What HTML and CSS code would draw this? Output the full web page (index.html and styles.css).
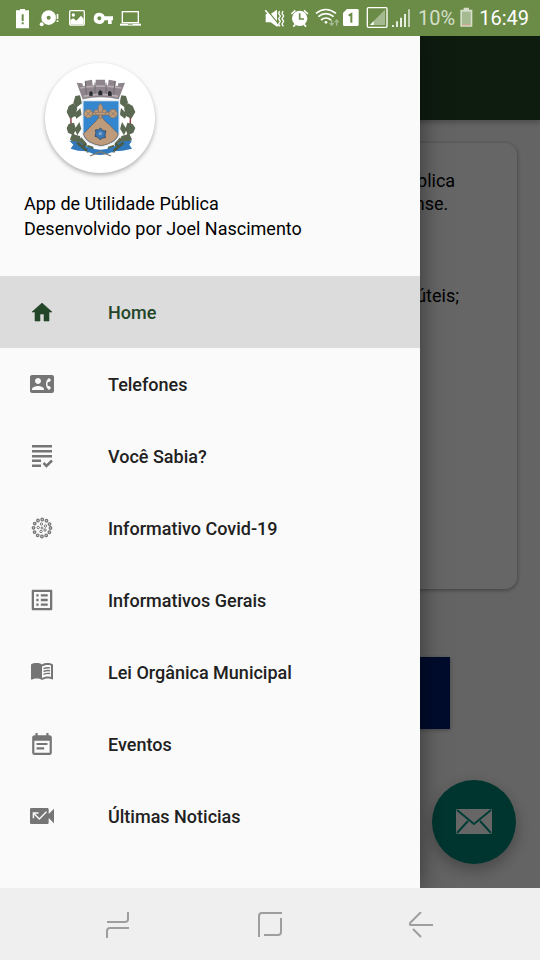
FILE: index.html
```html
<!DOCTYPE html>
<html lang="pt-BR">
<head>
    <meta charset="UTF-8">
    <meta name="viewport" content="width=device-width, initial-scale=1.0">
    <title>App de Utilidade Pública</title>
    <link rel="stylesheet" href="styles.css">
</head>
<body>
    <!-- Status bar -->
    <header class="status-bar">
        <div class="status-left">
            <svg width="24" height="24" viewBox="33 18 72 72" fill="#fff">
                <path d="M48 31h12v-4h15v4h12v54H48z"/>
                <path d="M65 43h6v20h-6zM65 67h6v6h-6z" fill="#6b8c47"/>
            </svg>
            <svg width="24" height="24" viewBox="114 18 72 72" fill="#fff">
                <circle cx="146" cy="53" r="22"/>
                <circle cx="146" cy="53" r="6" fill="#6b8c47"/>
                <circle cx="125" cy="73" r="8" fill="#6b8c47"/>
                <circle cx="125" cy="73" r="6"/>
                <path d="M170 42h5v15h-5zM170 61h5v5h-5z"/>
            </svg>
            <svg width="24" height="24" viewBox="195 18 72 72" fill="none" stroke="#fff">
                <rect x="209" y="32" width="44" height="43" rx="3" stroke-width="4"/>
                <circle cx="220" cy="45" r="5" fill="#fff" stroke="none"/>
                <path d="M211 72V60l9-5 9 7 14-15 8 10v15z" fill="#fff" stroke="none"/>
            </svg>
            <svg width="24" height="24" viewBox="276 18 72 72" fill="#fff">
                <path fill-rule="evenodd" d="M298 38a17 17 0 0 1 16 11h25v12h-4v11h-11V61h-10a17 17 0 1 1-16-23zm0 11a6 6 0 1 0 0 12 6 6 0 0 0 0-12z"/>
            </svg>
            <svg width="24" height="24" viewBox="357 18 72 72" fill="#fff">
                <rect x="367" y="35" width="48" height="33" fill="none" stroke="#fff" stroke-width="4"/>
                <path d="M360 71h63v6h-63z"/>
                <path d="M384 73h14v2h-14z" fill="#6b8c47"/>
            </svg>
        </div>
        <div class="status-right">
            <svg width="22" height="24" viewBox="15 18 66 72" fill="#fff">
                <path d="M20 42h15l19-13v51L35 67H20z"/>
                <path d="M23 29l39 47" stroke="#6b8c47" stroke-width="4"/>
                <path d="M19 31l39 48" stroke="#fff" stroke-width="5"/>
                <path d="M62 33l-3 7 5 8-5 8 5 8-5 8 4 7M72 33l-3 7 5 8-5 8 5 8-5 8 4 7" fill="none" stroke="#fff" stroke-width="4"/>
            </svg>
            <svg width="19" height="24" viewBox="93 18 57 72" fill="#fff">
                <circle cx="122" cy="55" r="23"/>
                <path d="M97 42l12-11M147 42l-12-11M103 80l6-7M141 80l-6-7" stroke="#fff" stroke-width="5"/>
                <path d="M122 40v17h13" fill="none" stroke="#6b8c47" stroke-width="5"/>
            </svg>
            <svg width="26" height="24" viewBox="162 18 78 72" fill="none" stroke="#fff" stroke-width="5">
                <path d="M171 40q29-23 60 0M178 50q22-18 46 0M186 60q15-12 30 0"/>
                <circle cx="201" cy="67" r="4" fill="#fff" stroke="none"/>
                <path d="M218 60v15m-6-6l6 7 6-7M233 77V60m-6 7l6-7 6 7" stroke="#a6ba91" stroke-width="4"/>
            </svg>
            <svg width="18" height="24" viewBox="252 18 54 72" fill="#fff">
                <path d="M264 27h31q4 0 4 4v43q0 4-4 4h-39q-4 0-4-4V39z"/>
                <path d="M269 47l8-5v26" fill="none" stroke="#6b8c47" stroke-width="6"/>
            </svg>
            <svg width="23" height="24" viewBox="318 18 69 72">
                <rect x="325" y="23" width="59" height="59" rx="3" fill="none" stroke="#fff" stroke-width="4"/>
                <path d="M378 29v46h-46z" fill="#a6ba91"/>
                <path d="M344 64v11h-11z" fill="#fff"/>
            </svg>
            <svg width="22" height="24" viewBox="399 18 66 72" stroke="#fff" stroke-width="5">
                <path d="M402 81v-6M414 81V64M426 81V53M438 81V42"/>
                <path d="M450 81V28" stroke="#d4dec9"/>
            </svg>
            <span class="battery-level">10%</span>
            <svg width="16" height="24" viewBox="599 18 48 72">
                <path d="M603 29h10v-6h16v6h10v51h-36z" fill="#d4dec9"/>
                <path d="M608 35h26v39h-26z" fill="#a6ba91"/>
                <path d="M608 73h26v3h-26z" fill="#d49a80"/>
            </svg>
            <time>16:49</time>
        </div>
    </header>

    <div class="screen">
        <!-- Page behind the drawer -->
        <main class="page">
            <div class="app-bar"></div>
            <div class="card">
                <div class="card-text">
                    <p>utilidade pública<br>o riograndense.</p>
                    <p>- Telefones úteis;</p>
                </div>
            </div>
            <button class="main-button" aria-label="Acessar"></button>
            <button class="fab" aria-label="Enviar e-mail">
                <svg width="36" height="26" viewBox="0 0 36 26">
                    <rect width="36" height="25" rx="1" fill="#fff"/>
                    <path d="M1 1l17 14L35 1M1 24l11-12M35 24L24 12" fill="none" stroke="#009688" stroke-width="2"/>
                </svg>
            </button>
        </main>
        <div class="scrim"></div>

        <!-- Navigation drawer -->
        <aside class="drawer">
            <div class="drawer-header">
                <div class="avatar">
                    <svg width="110" height="110" viewBox="45 39 330 330">
                        <!-- laurel branches -->
                        <g fill="none" stroke="#8b3d45" stroke-width="4">
                            <path d="M150 145q-34 38-26 86 8 50 70 72"/>
                            <path d="M274 145q34 38 26 86-8 50-70 72"/>
                        </g>
                        <g fill="#5b6952">
                            <path d="M150 136l6 24-16 12-10-14 6-20zM130 160l12 14-6 24-16 8-10-20 6-18zM151 174l4 20-16 12-6-14zM116 222l16-4 6 20-8 18-16-8-4-14zM148 216l6 20-12 20-8-18zM126 252l24 6 4 24-20 2-14-16zM154 262l16 18-4 22-20-8-8-10zM172 284l18 6 2 14-22 4z"/>
                            <path d="M274 136l-6 24 16 12 10-14-6-20zM294 160l-12 14 6 24 16 8 12-20-8-18zM273 174l-4 20 16 12 6-14zM308 222l-16-4-6 20 8 18 16-8 6-14zM276 216l-6 20 12 20 8-18zM298 252l-24 6-4 24 20 2 16-16zM270 262l-16 18 4 22 20-8 8-10zM252 284l-18 6-2 14 22 4z"/>
                        </g>
                        <!-- ribbon -->
                        <path d="M118 272l28 4 28 16q38 14 74 0l28-18 30-2-8 12 8 12-28 6-26 2q-44 22-80 0l-28-2-22-6 8-12z" fill="#3179bd"/>
                        <path d="M141 278l30 24M281 278l-30 24M157 290l12-8M267 290l-12-8" stroke="#4c5a45" stroke-width="8"/>
                        <path d="M180 318l32-13 31 13" fill="none" stroke="#857866" stroke-width="4"/>
                        <!-- shield -->
                        <path d="M158 151h110v96q0 34-55 43-55-9-55-43z" fill="#3486cf" stroke="#e7edf2" stroke-width="5"/>
                        <path d="M211 190q12 26 25 32l29 30q-6 27-52 35-46-8-53-35l31-32q12-8 20-30z" fill="#bd9b7b" stroke="#665b54" stroke-width="2"/>
                        <g fill="#bd9b7b" stroke="#806f64" stroke-width="2">
                            <circle cx="175" cy="191" r="13"/>
                            <circle cx="249" cy="191" r="13"/>
                            <path d="M187 187h50v8h-50zM211 160q12 14 5 25 3-11 12-5 6 8-4 14-6 4-9 1v10h-8v-10q-5 3-10-2-9-6-3-13 9-5 12 5-6-13 5-25z"/>
                            <path d="M165 181l20 20M185 181l-20 20M239 181l20 20M259 181l-20 20"/>
                        </g>
                        <path d="M212 234l6 8 10 1-3 10 1 10-9 1-7 5-6-7-9-3 3-10-2-9 10-1z" fill="#3a78b7" stroke="#38516b" stroke-width="3"/>
                        <circle cx="211" cy="251" r="5" fill="#84a9cd"/>
                        <!-- mural crown -->
                        <path d="M140 98l17 2 2 8 7-1-2-14 22-4 2 17 9-1V89h28v16l9 1 2-17 22 4-2 14 7 1 2-8 20-2-19 50q-54-13-108 0z" fill="#8e858c"/>
                        <path d="M151 114l25-4 35-2 36 2 27 4M161 139q50-12 103 0" fill="none" stroke="#b7adb3" stroke-width="5"/>
                        <path d="M178 138v-10q5-10 10 0v9zM205 136v-10q6-10 12 0v10zM234 137v-10q6-9 11 1v10z" fill="#282a30"/>
                        <path d="M166 94l3 40M195 98v33M228 98v33M255 94l-4 40" stroke="#716a70" stroke-width="3"/>
                    </svg>
                </div>
                <p>App de Utilidade Pública</p>
                <p>Desenvolvido por Joel Nascimento</p>
            </div>
            <nav class="menu">
                <a href="#" class="menu-item active">
                    <svg viewBox="0 0 24 24"><path d="M10 21v-7h4v7h5v-9h3L12 3 2 12h3v9z" stroke="#234628" stroke-width=".6"/></svg>
                    Home
                </a>
                <a href="#" class="menu-item">
                    <svg viewBox="0 0 24 24"><path d="M22 3H2C.9 3 0 3.900 0 5v14c0 1.100.9 2 2 2h20c1.100 0 1.990-.9 1.990-2L24 5c0-1.100-.9-2-2-2zM8 6c1.660 0 3 1.340 3 3s-1.340 3-3 3-3-1.340-3-3 1.340-3 3-3zm6 12H2v-1c0-2 4-3.100 6-3.100s6 1.100 6 3.100v1zm3.850-4h1.640L21 16l-1.990 1.990c-1.310-.98-2.280-2.380-2.730-3.990-.18-.64-.28-1.310-.28-2s.1-1.360.28-2c.45-1.620 1.420-3.010 2.730-3.990L21 8l-1.510 2h-1.640c-.22.63-.35 1.300-.35 2s.13 1.370.35 2z"/></svg>
                    Telefones
                </a>
                <a href="#" class="menu-item">
                    <svg viewBox="0 0 24 24"><path d="M2 1h20v2.500H2zM2 6h20v2.500H2zM2 11h20v2.500H2zM2 15.500h9V18H2zM2 20.500h9V23H2z"/><path d="M13.500 19l3 3L22 16.500" fill="none" stroke="#757575" stroke-width="2.500"/></svg>
                    Você Sabia?
                </a>
                <a href="#" class="menu-item">
                    <svg viewBox="0 0 24 24">
                        <g fill="none" stroke="#757575">
                            <circle cx="12" cy="12" r="8.500" stroke-width="3.800" stroke-linecap="round" stroke-dasharray="0 4.450"/>
                            <circle cx="12" cy="12" r="8.500" stroke="#d0d0d0" stroke-width="1.400" stroke-linecap="round" stroke-dasharray="0 4.450"/>
                            <circle cx="12" cy="12" r="1"/>
                            <circle cx="11.500" cy="8" r="1.200"/>
                            <circle cx="15.500" cy="10" r="1.200"/>
                            <circle cx="15" cy="14" r="1.200"/>
                            <circle cx="11" cy="15.500" r="1.200"/>
                            <circle cx="8.200" cy="11.500" r="1.200"/>
                        </g>
                    </svg>
                    Informativo Covid-19
                </a>
                <a href="#" class="menu-item">
                    <svg viewBox="1.500 1.500 21 21"><path d="M19 5v14H5V5h14m1.100-2H3.900c-.5 0-.9.4-.9.9v16.200c0 .4.4.9.9.9h16.200c.4 0 .9-.5.9-.9V3.900c0-.5-.5-.9-.9-.9zM11 7h6v2h-6V7zm0 4h6v2h-6v-2zm0 4h6v2h-6zM7 7h2v2H7zm0 4h2v2H7zm0 4h2v2H7z"/></svg>
                    Informativos Gerais
                </a>
                <a href="#" class="menu-item">
                    <svg viewBox="0 1.500 24 24"><path d="M21 5c-1.110-.35-2.330-.5-3.500-.5-1.950 0-4.050.4-5.500 1.500-1.450-1.100-3.550-1.500-5.500-1.500S2.450 4.900 1 6v14.650c0 .25.25.5.5.5.1 0 .15-.05.25-.05C3.100 20.450 5.050 20 6.500 20c1.950 0 4.050.4 5.500 1.500 1.350-.85 3.800-1.500 5.500-1.500 1.650 0 3.350.3 4.750 1.050.1.05.15.05.25.05.25 0 .5-.25.5-.5V6c-.6-.45-1.250-.75-2-1zm0 13.500c-1.100-.35-2.300-.5-3.500-.5-1.700 0-4.150.65-5.500 1.500V8c1.350-.85 3.800-1.500 5.500-1.500 1.200 0 2.400.15 3.500.5v11.500z"/><path d="M13.500 10.200q3-1.300 6.500-.8M13.500 13q3-1.300 6.500-.8M13.500 15.800q3-1.300 6.500-.8" fill="none" stroke="#757575" stroke-width="1.400"/></svg>
                    Lei Orgânica Municipal
                </a>
                <a href="#" class="menu-item">
                    <svg viewBox="1 0 22 22"><path d="M17 10H7v2h10v-2zm2-7h-1V1h-2v2H8V1H6v2H5c-1.110 0-1.990.9-1.990 2L3 19c0 1.100.89 2 2 2h14c1.100 0 2-.9 2-2V5c0-1.100-.9-2-2-2zm0 16H5V8h14v11zm-5-5H7v2h7v-2z"/></svg>
                    Eventos
                </a>
                <a href="#" class="menu-item">
                    <svg viewBox="3 3 18 18"><path d="M17 10.500V7c0-.55-.45-1-1-1H4c-.55 0-1 .45-1 1v10c0 .55.45 1 1 1h12c.55 0 1-.45 1-1v-3.500l4 4v-11l-4 4zM10 15l-3.890-3.890v2.550H5V9.220h4.440v1.110H6.890l3.110 3.100 4.990-5 .71.71L10 15z"/></svg>
                    Últimas Noticias
                </a>
            </nav>
        </aside>
    </div>

    <!-- Android navigation buttons -->
    <footer class="nav-bar">
        <button aria-label="Recentes">
            <svg width="26" height="26" viewBox="0 0 26 26"><path d="M2 10h18q3 0 3-3V0M24 16H5q-3 0-3 3v7"/></svg>
        </button>
        <button aria-label="Início">
            <svg width="26" height="26" viewBox="0 0 26 26"><path d="M2 25V4q0-3 3-3h20M24 6v14q0 3-3 3H7"/></svg>
        </button>
        <button aria-label="Voltar">
            <svg width="26" height="26" viewBox="0 0 26 26"><path d="M12 0L1 11q-1 2 1 2h22M4 17l8 8"/></svg>
        </button>
    </footer>
</body>
</html>
```
FILE: styles.css
```css
* {
    box-sizing: border-box;
}
body {
    margin: 0;
    min-height: 100vh;
    display: flex;
    flex-direction: column;
    font-family: Roboto, 'Liberation Sans', sans-serif;
    font-size: 18px;
    color: #000;
    background-color: #fafafa;
}
p {
    margin: 0;
}
button {
    border: none;
    padding: 0;
    background: none;
    cursor: pointer;
}
svg {
    display: block;
    flex-shrink: 0;
}

/* Status bar */
.status-bar {
    height: 36px;
    padding: 0 11px;
    display: flex;
    align-items: center;
    justify-content: space-between;
    background-color: #6b8c47;
    color: white;
    font-size: 20px;
}
.status-left {
    display: flex;
    gap: 3px;
}
.status-right {
    display: flex;
    align-items: center;
    gap: 4px;
}
.battery-level {
    color: #d4dec9;
}

/* Page content */
.screen {
    position: relative;
    flex: 1;
    display: flex;
    overflow: hidden;
}
.page {
    flex: 1;
    display: flex;
    flex-direction: column;
}
.app-bar {
    height: 84px;
    background-color: #234628;
    box-shadow: 0 2px 6px rgba(0,0,0,0.3);
}
.card {
    min-height: 446px;
    margin: 23px 23px 68px;
    padding: 26px 58px;
    display: flex;
    justify-content: flex-end;
    background-color: white;
    border-radius: 12px;
    box-shadow: 0 1px 4px rgba(0,0,0,0.4);
    line-height: 23px;
}
.card p {
    margin-bottom: 69px;
}
.main-button {
    width: 66.6%;
    height: 72px;
    align-self: center;
    background-color: #001f70;
    box-shadow: 0 1px 4px rgba(0,0,0,0.3);
}
.fab {
    position: absolute;
    right: 24px;
    bottom: 24px;
    width: 84px;
    height: 84px;
    display: flex;
    align-items: center;
    justify-content: center;
    border-radius: 50%;
    background-color: #008577;
    box-shadow: 0 6px 16px rgba(0,0,0,0.3);
}
.scrim {
    position: absolute;
    inset: 0;
    background-color: rgba(0,0,0,0.6);
}

/* Drawer */
.drawer {
    position: absolute;
    top: 0;
    bottom: 0;
    left: 0;
    width: calc(100% - 120px);
    background-color: #fafafa;
    box-shadow: 0 0 24px rgba(0,0,0,0.5);
}
.drawer-header {
    padding: 27px 24px 35px;
    line-height: 25px;
}
.avatar {
    width: 110px;
    height: 110px;
    margin: 0 0 18px 21px;
    border-radius: 50%;
    background-color: white;
    box-shadow: 0 2px 4px rgba(0,0,0,0.3);
}
.menu-item {
    height: 72px;
    padding: 0 30px;
    display: flex;
    align-items: center;
    gap: 54px;
    color: #212121;
    font-weight: 500;
    text-decoration: none;
}
.menu-item svg {
    width: 24px;
    height: 24px;
    fill: #757575;
}
.menu-item.active {
    background-color: #dcdcdc;
    color: #234628;
}
.menu-item.active svg {
    fill: #234628;
}

/* Android navigation */
.nav-bar {
    height: 72px;
    padding: 2px 42px 0;
    display: flex;
    align-items: center;
    background-color: #efefef;
}
.nav-bar button {
    flex: 1;
    display: flex;
    justify-content: center;
}
.nav-bar svg {
    fill: none;
    stroke: #9e9e9e;
    stroke-width: 2;
}
```
